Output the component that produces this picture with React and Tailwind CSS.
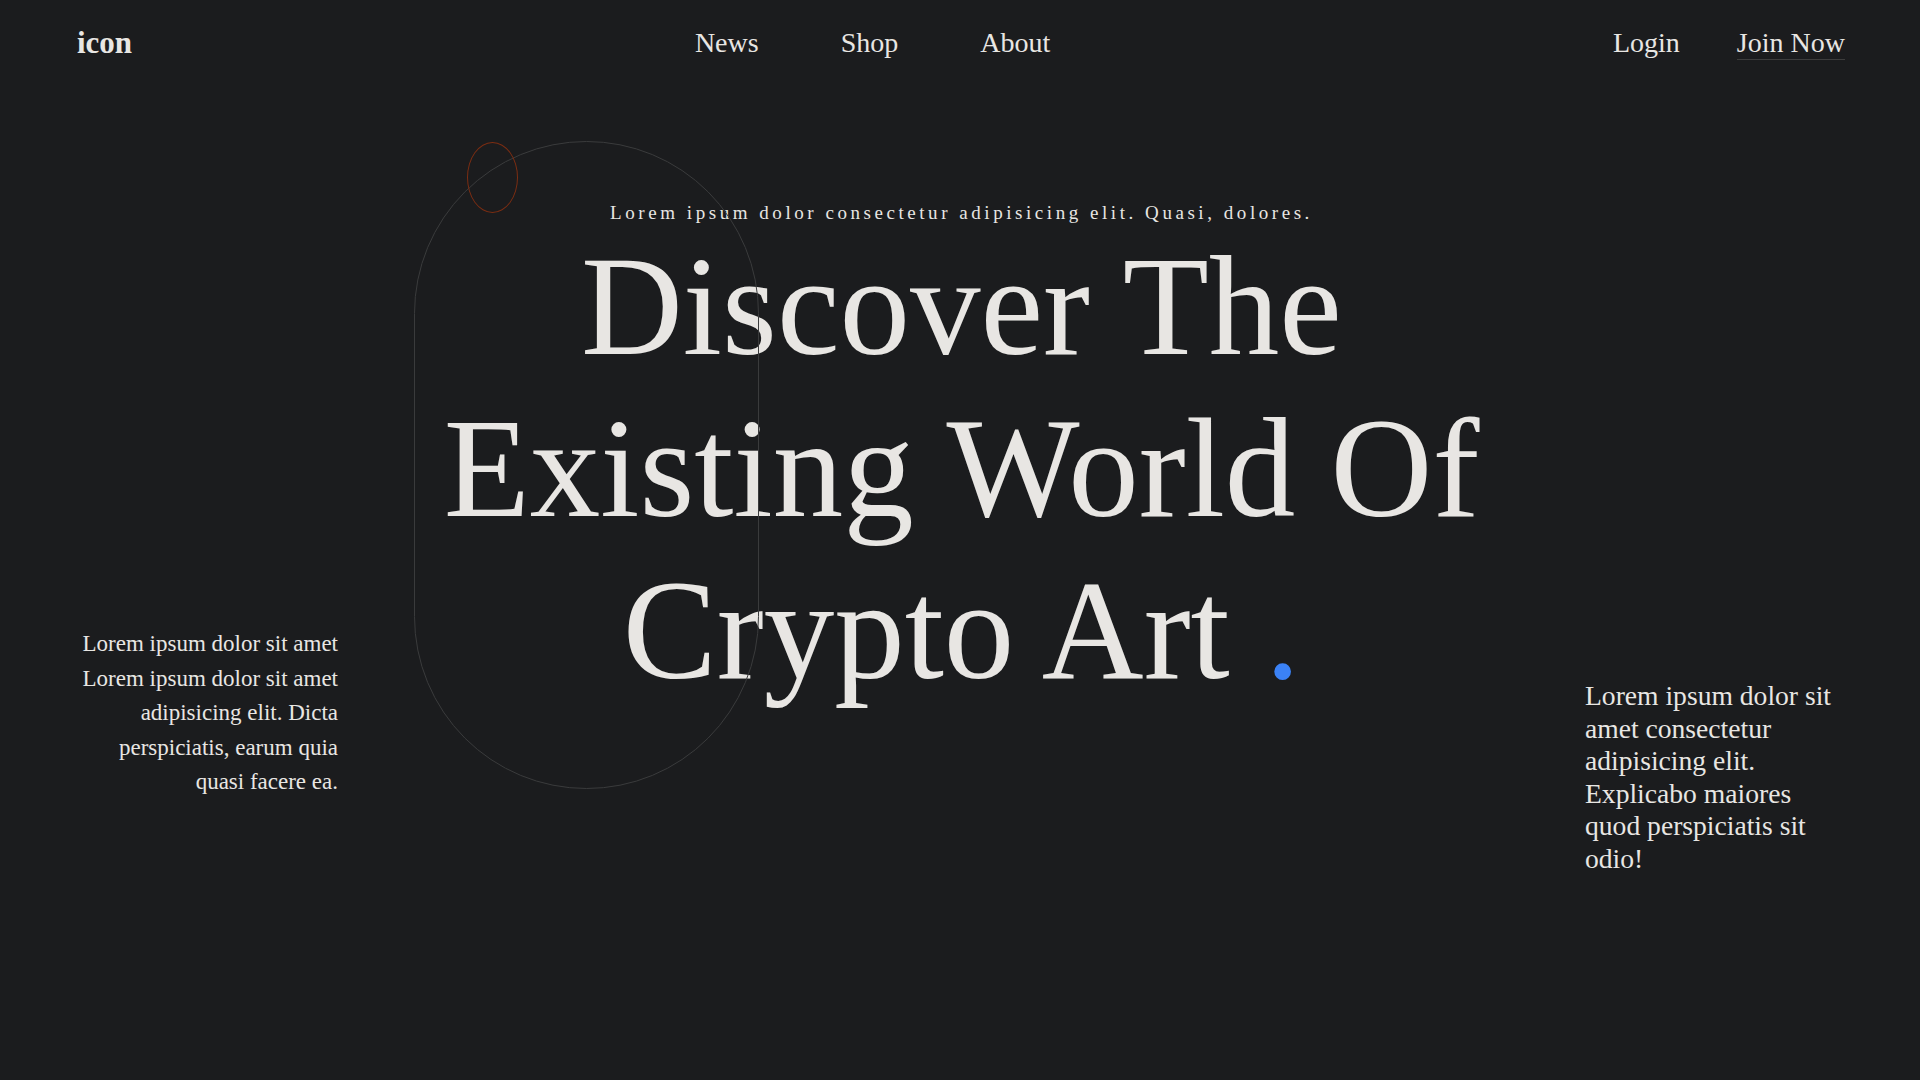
import React from 'react';

const navLinks = ['News', 'Shop', 'About'];

const App = () => {
  return (
    <div className="relative min-h-screen w-full overflow-hidden bg-[#1b1c1e] text-[#e8e6e3] font-['Liberation_Serif',serif]">
      {/* Top bar */}
      <nav className="flex h-[85px] items-center justify-between pl-[77px] pr-[75px]">
        <a href="#" className="text-[31px] font-bold leading-none">icon</a>
        <ul className="flex items-center gap-[82px] text-[28px] leading-none">
          {navLinks.map((link) => (
            <li key={link}>
              <a href="#">{link}</a>
            </li>
          ))}
        </ul>
        <div className="flex items-center gap-[57px] text-[28px] leading-none">
          <a href="#">Login</a>
          <a href="#" className="-mb-[3px] border-b border-[#3d3d3d] pb-[2px]">Join Now</a>
        </div>
      </nav>

      {/* Hero */}
      <main className="flex pl-[77px] pr-[75px]">
        <div className="w-[261px] shrink-0 pt-[542px]">
          <p className="text-right text-[23px] leading-[34.5px]">
            Lorem ipsum dolor sit amet Lorem ipsum dolor sit amet adipisicing elit. Dicta perspiciatis, earum quia quasi facere ea.
          </p>
        </div>

        <div className="flex-1 pt-[119px] text-center">
          <p className="text-[19px] leading-[18px] tracking-[3.55px]">
            Lorem ipsum dolor consectetur adipisicing elit. Quasi, dolores.
          </p>
          <h1 className="mt-[3px] text-[141px] font-normal leading-[162px]">
            <span className="block">Discover The</span>
            <span className="block">Existing World Of</span>
            <span className="block">
              Crypto Art <span className="text-[#3b82f6]">.</span>
            </span>
          </h1>
        </div>

        <div className="w-[260px] shrink-0 pt-[595px]">
          <p className="text-[27.6px] leading-[32.6px]">
            Lorem ipsum dolor sit amet consectetur adipisicing elit. Explicabo maiores quod perspiciatis sit odio!
          </p>
        </div>
      </main>

      {/* Decorative outlines */}
      <div className="pointer-events-none absolute left-[414px] top-[141px] h-[648px] w-[345px] rounded-full border border-[#3a3b3c]" />
      <div className="pointer-events-none absolute left-[467px] top-[142px] h-[71px] w-[51px] rounded-[50%] border border-[#7c2d12]" />
    </div>
  );
};

export default App;
